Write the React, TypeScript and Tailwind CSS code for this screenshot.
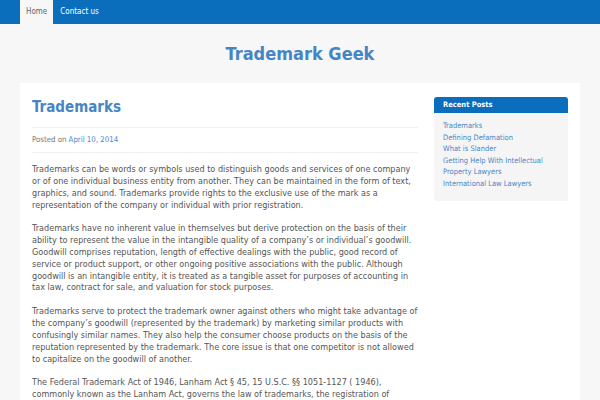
const posts = [
  'Trademarks',
  'Defining Defamation',
  'What is Slander',
  'Getting Help With Intellectual Property Lawyers',
  'International Law Lawyers',
]

const paragraphs = [
  'Trademarks can be words or symbols used to distinguish goods and services of one company or of one individual business entity from another. They can be maintained in the form of text, graphics, and sound. Trademarks provide rights to the exclusive use of the mark as a representation of the company or individual with prior registration.',
  'Trademarks have no inherent value in themselves but derive protection on the basis of their ability to represent the value in the intangible quality of a company\u2019s or individual\u2019s goodwill. Goodwill comprises reputation, length of effective dealings with the public, good record of service or product support, or other ongoing positive associations with the public. Although goodwill is an intangible entity, it is treated as a tangible asset for purposes of accounting in tax law, contract for sale, and valuation for stock purposes.',
  'Trademarks serve to protect the trademark owner against others who might take advantage of the company\u2019s goodwill (represented by the trademark) by marketing similar products with confusingly similar names. They also help the consumer choose products on the basis of the reputation represented by the trademark. The core issue is that one competitor is not allowed to capitalize on the goodwill of another.',
  'The Federal Trademark Act of 1946, Lanham Act \u00a7 45, 15 U.S.C. \u00a7\u00a7 1051-1127 ( 1946), commonly known as the Lanham Act, governs the law of trademarks, the registration of trademarks, and the remedies available for infringement.',
]

export default function App() {
  return (
    <div className="h-[400px] overflow-hidden bg-[#f7f7f7] font-['DejaVu_Sans_Condensed','DejaVu_Sans',sans-serif] font-stretch-condensed">
      {/* nav */}
      <div className="flex h-6 bg-[#0a6ebd] pl-5 text-[8px]">
        <a className="flex items-center bg-[#f7f7f7] px-[6px] text-[#666]">Home</a>
        <a className="flex items-center px-[7px] text-white">Contact us</a>
      </div>

      {/* header */}
      <div className="flex h-[59px] items-center justify-center">
        <h1 className="text-[18px] font-bold text-[#4585c6]">Trademark Geek</h1>
      </div>

      {/* card */}
      <div className="mx-5 flex gap-[13px] bg-white px-3 pt-[12px]">
        <main className="w-[389px] shrink-0">
          <h2 className="pb-[8px] text-[15px] leading-[24px] font-bold text-[#4585c6]">Trademarks</h2>
          <div className="mr-[3px] border-y border-[#f0f0f0] py-[6px] text-[7.8px] leading-[12px] text-[#777]">
            Posted on <span className="text-[#4a8ad0]">April 10, 2014</span>
          </div>
          <div className="pt-[11px] font-['DejaVu_Sans',sans-serif] font-stretch-normal text-[8.1px] leading-[11.85px] text-[#555]">
            {paragraphs.map((p, i) => (
              <p key={i} className="mb-[11.85px]">{p}</p>
            ))}
          </div>
        </main>

        <aside className="ml-auto mt-[2px] w-[134px] shrink-0">
          <div className="overflow-hidden rounded-[3px] bg-[#f5f5f5] pb-[12px]">
            <div className="flex h-4 items-center bg-[#0a6ebd] px-[9px] text-[7.5px] font-bold text-white">
              Recent Posts
            </div>
            <ul className="px-[9px] pt-[7px] text-[7.5px] leading-[11.5px] text-[#4a86c5]">
              {posts.map((p) => (
                <li key={p}>{p}</li>
              ))}
            </ul>
          </div>
        </aside>
      </div>
    </div>
  )
}
